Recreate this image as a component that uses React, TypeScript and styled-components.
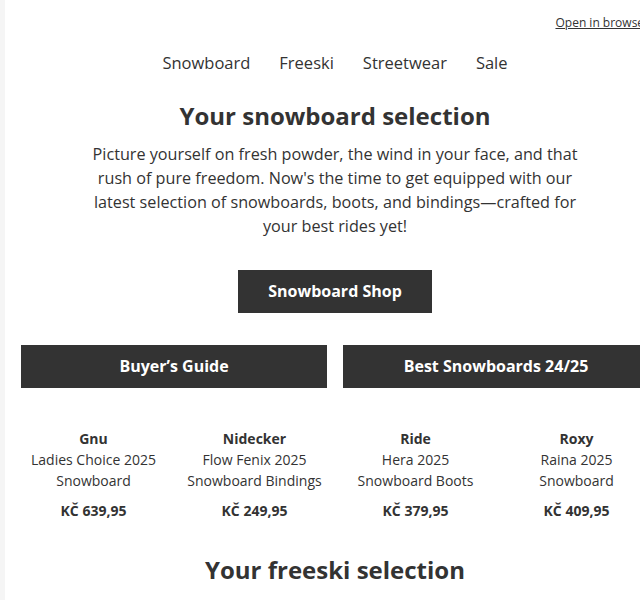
import React from "react";
import styled, { createGlobalStyle } from "styled-components";

const GlobalStyle = createGlobalStyle`
  body {
    margin: 0;
    background: #f5f5f5;
    font-family: "Open Sans", "Noto Sans", sans-serif;
    color: #333333;
  }
`;

const products = [
  { brand: "Gnu", name: "Ladies Choice 2025", kind: "Snowboard", price: "KČ 639,95" },
  { brand: "Nidecker", name: "Flow Fenix 2025", kind: "Snowboard Bindings", price: "KČ 249,95" },
  { brand: "Ride", name: "Hera 2025", kind: "Snowboard Boots", price: "KČ 379,95" },
  { brand: "Roxy", name: "Raina 2025", kind: "Snowboard", price: "KČ 409,95" },
];

const App = () => {
  return (
    <SPage>
      <GlobalStyle />
      <SMail>
        <STopBar>
          <SBrowserLink href="#">Open in browser</SBrowserLink>
        </STopBar>
        <SNav>
          <SNavLink href="#">Snowboard</SNavLink>
          <SNavLink href="#">Freeski</SNavLink>
          <SNavLink href="#">Streetwear</SNavLink>
          <SNavLink href="#">Sale</SNavLink>
        </SNav>
        <STitle>Your snowboard selection</STitle>
        <SIntro>
          Picture yourself on fresh powder, the wind in your face, and that rush of
          pure freedom. Now's the time to get equipped with our latest selection of
          snowboards, boots, and bindings—crafted for your best rides yet!
        </SIntro>
        <SCenter>
          <SButton href="#">Snowboard Shop</SButton>
        </SCenter>
        <SButtonRow>
          <SWideButton href="#">Buyer’s Guide</SWideButton>
          <SWideButton href="#">Best Snowboards 24/25</SWideButton>
        </SButtonRow>
        <SProducts>
          {products.map((p) => (
            <SProduct key={p.brand}>
              <SBrand>{p.brand}</SBrand>
              <SProductName>
                {p.name}
                <br />
                {p.kind}
              </SProductName>
              <SPrice>{p.price}</SPrice>
            </SProduct>
          ))}
        </SProducts>
        <SNextTitle>Your freeski selection</SNextTitle>
      </SMail>
    </SPage>
  );
};

export default App;

const SPage = styled.div`
  padding-left: 5px;
  height: 600px;
  overflow: hidden;
`;

const SMail = styled.div`
  width: 660px;
  min-height: 600px;
  background: #ffffff;
`;

const STopBar = styled.div`
  display: flex;
  justify-content: flex-end;
  padding: 15px 16px 0;
`;

const SBrowserLink = styled.a`
  font-size: 12px;
  line-height: 16px;
  color: #333333;
  text-decoration: underline;
`;

const SNav = styled.nav`
  display: flex;
  justify-content: center;
  gap: 29px;
  padding-top: 20px;
`;

const SNavLink = styled.a`
  font-size: 16.5px;
  line-height: 24px;
  color: #333333;
  text-decoration: none;
`;

const STitle = styled.h1`
  margin: 25px 0 0;
  font-size: 24px;
  line-height: 32px;
  font-weight: 700;
  text-align: center;
`;

const SNextTitle = styled(STitle)`
  margin-top: 33px;
`;

const SIntro = styled.p`
  margin: 10px auto 0;
  max-width: 494px;
  font-size: 16.2px;
  line-height: 24px;
  text-align: center;
`;

const SCenter = styled.div`
  display: flex;
  justify-content: center;
  margin-top: 32px;
`;

const SButton = styled.a`
  display: block;
  background: #333333;
  color: #ffffff;
  font-size: 16px;
  line-height: 23px;
  font-weight: 700;
  padding: 10px 30px;
  text-decoration: none;
`;

const SButtonRow = styled.div`
  display: grid;
  grid-template-columns: 1fr 1fr;
  gap: 16px;
  padding: 0 16px;
  margin-top: 32px;
`;

const SWideButton = styled(SButton)`
  text-align: center;
  padding: 10px 0;
`;

const SProducts = styled.div`
  display: grid;
  grid-template-columns: repeat(4, 1fr);
  padding: 0 8px;
  margin-top: 40px;
`;

const SProduct = styled.div`
  text-align: center;
  font-size: 14px;
  line-height: 21px;
`;

const SBrand = styled.div`
  font-weight: 700;
`;

const SProductName = styled.div``;

const SPrice = styled.div`
  margin-top: 9px;
  font-weight: 700;
`;
